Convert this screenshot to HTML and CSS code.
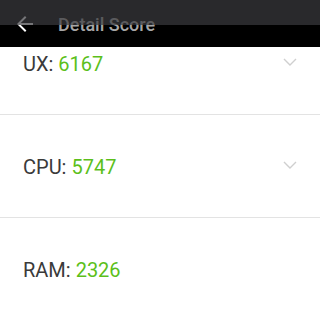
FILE: index.html
```html
<!DOCTYPE html>
<html>
<head>
	<title>Detail Score</title>
	<meta name="viewport" content="width=device-width, initial-scale=1">
	<link rel="stylesheet" href="styles.css">
</head>

<body>
	<!-- Status bar (sits over the toolbar) -->
	<div class="statusbar"></div>

	<header class="toolbar">
		<svg class="back" width="24" height="24" viewBox="0 0 24 24">
			<path d="M20 11H7.83l5.59-5.59L12 4l-8 8 8 8 1.41-1.41L7.83 13H20v-2z" fill="#fff"/>
		</svg>
		<div class="title">Detail Score</div>
	</header>

	<section class="list">
		<div class="row">
			<div class="label">UX: <span class="score">6167</span></div>
			<svg class="chevron" width="14" height="8" viewBox="0 0 14 8">
				<path d="M1 1l6 6 6-6" fill="none" stroke="#cfcfcf" stroke-width="1.4"/>
			</svg>
		</div>
		<div class="row">
			<div class="label">CPU: <span class="score">5747</span></div>
			<svg class="chevron" width="14" height="8" viewBox="0 0 14 8">
				<path d="M1 1l6 6 6-6" fill="none" stroke="#cfcfcf" stroke-width="1.4"/>
			</svg>
		</div>
		<div class="row">
			<div class="label">RAM: <span class="score">2326</span></div>
		</div>
	</section>
</body>
</html>
```

FILE: styles.css
```css
body {
  margin: 0;
  background-color: #fff;
  font-family: Roboto, "Liberation Sans", sans-serif;
}

/* Status bar over the toolbar */
.statusbar {
  position: fixed;
  top: 0;
  left: 0;
  width: 100%;
  height: 25px;
  background-color: rgba(58, 59, 62, 0.7);
  z-index: 2;
}

/* The toolbar */
.toolbar {
  position: fixed;
  top: 0;
  left: 0;
  width: 100%;
  height: 47px;
  background-color: #000;
  display: flex;
  align-items: center;
  z-index: 1;
}

.back {
  margin-left: 13px;
  margin-top: 1px;
}

.title {
  margin-left: 21px;
  margin-top: 2px;
  font-size: 18px;
  font-weight: 500;
  color: #a6a6a6;
}

/* Score rows */
.list {
  margin-top: 12px;
}

.row {
  height: 102px;
  border-bottom: 1px solid #e3e3e3;
  display: flex;
  align-items: center;
  justify-content: space-between;
  padding: 0 23px 0 23px;
}

.row:last-child {
  border-bottom: none;
}

.label {
  font-size: 20px;
  color: #3a3a3a;
  margin-top: 2px;
}

.score {
  color: #5cbf1b;
}

.chevron {
  margin-top: -3px;
}
```
